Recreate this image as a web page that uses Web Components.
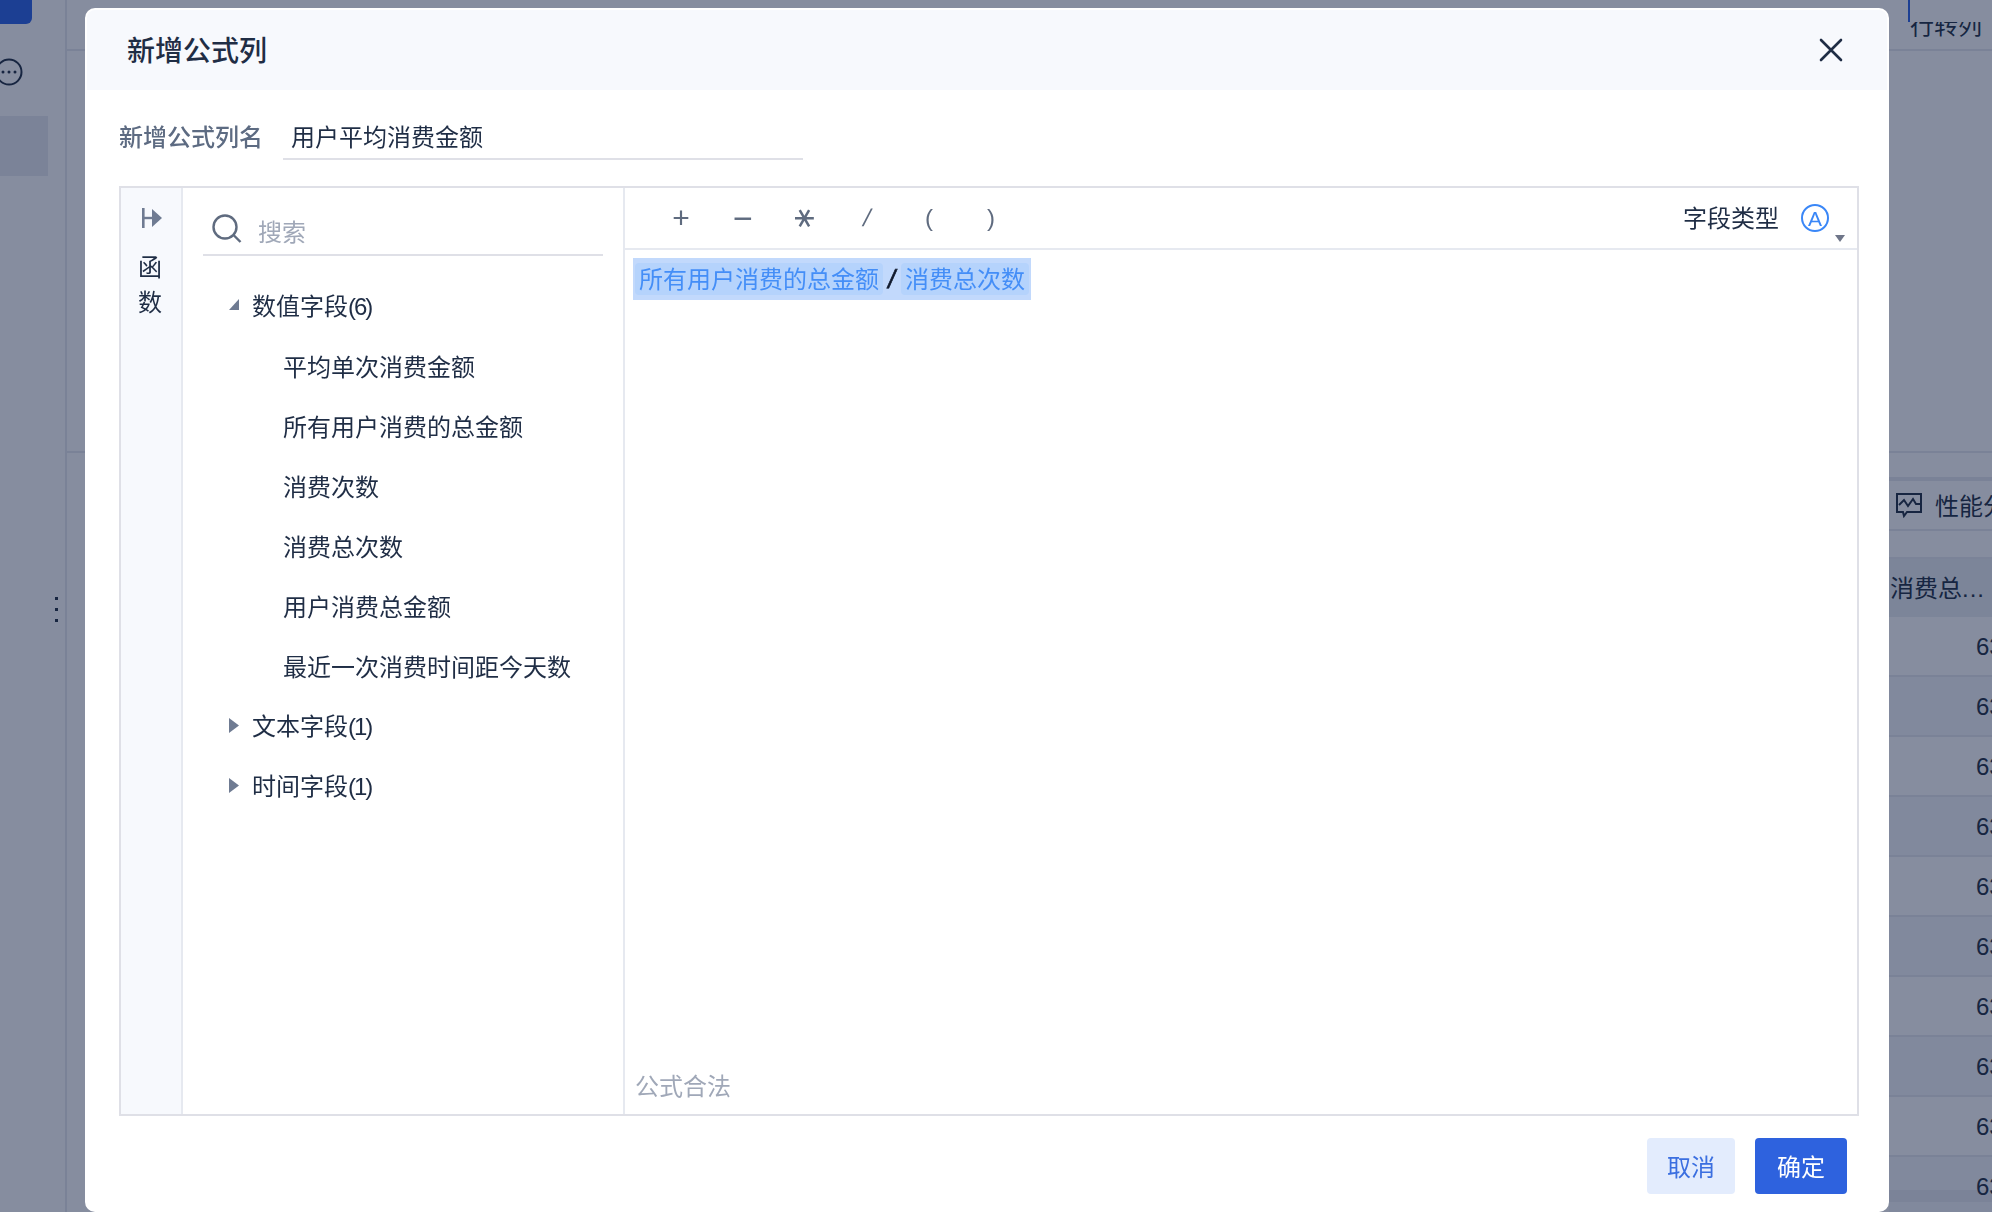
<!DOCTYPE html>
<html lang="zh-CN">
<head>
<meta charset="utf-8">
<title>新增公式列</title>
<style>
	html, body { margin: 0; height: 100%; overflow: hidden; }
	body { font: 24px/36px "Noto Sans CJK SC", "Liberation Sans", sans-serif; color: #1f2d45; background: #fff; }
</style>
</head>
<body>
<app-page>
	<formula-dialog heading="新增公式列" name-label="新增公式列名" name-value="用户平均消费金额">
		<field-tree slot="fields">
			<tree-node label="数值字段" count="6" expanded>
				<tree-leaf>平均单次消费金额</tree-leaf>
				<tree-leaf>所有用户消费的总金额</tree-leaf>
				<tree-leaf>消费次数</tree-leaf>
				<tree-leaf>消费总次数</tree-leaf>
				<tree-leaf>用户消费总金额</tree-leaf>
				<tree-leaf>最近一次消费时间距今天数</tree-leaf>
			</tree-node>
			<tree-node label="文本字段" count="1"></tree-node>
			<tree-node label="时间字段" count="1"></tree-node>
		</field-tree>
		<formula-chip slot="formula">所有用户消费的总金额</formula-chip>
		<span slot="formula" style="width:18px;text-align:center;font:26px/32px 'Liberation Sans',sans-serif;color:#10192c;-webkit-text-stroke:.7px #10192c;transform:skewX(-10deg)">/</span>
		<formula-chip slot="formula">消费总次数</formula-chip>
	</formula-dialog>
</app-page>

<script>
;(function(customElements) {
	class AppPage extends HTMLElement {
		constructor() {
			super()
			this.attachShadow({ mode: 'open' })
		}

		connectedCallback() {
			let rows = ''
			for (let i = 0; i < 10; ++i) {
				rows += `<div class="row${i % 2 ? ' odd' : ''}${i === 9 ? ' last' : ''}">63</div>`
			}
			this.shadowRoot.innerHTML = `
				<style>
					:host {
						display: flex;
						width: 1992px;
						height: 1212px;
						overflow: hidden;
						background: #fff;
					}
					.rail {
						position: relative;
						width: 65px;
						flex: none;
						border-right: 2px solid #e6e8ee;
					}
					.brand {
						width: 32px;
						height: 24px;
						background: #2b63e7;
						border-radius: 0 0 6px 0;
					}
					.more {
						display: block;
						margin: 34px 0 0 -3px;
					}
					.nav-on {
						width: 48px;
						height: 60px;
						margin-top: 30px;
						background: #e9ebf1;
					}
					.dots {
						position: absolute;
						left: 55px;
						top: 597px;
						display: flex;
						flex-direction: column;
						gap: 8px;
					}
					.dots i {
						width: 3px;
						height: 3px;
						background: #212f43;
					}
					.main {
						flex: 1;
						min-width: 0;
					}
					.main .top {
						height: 49px;
						border-bottom: 2px solid #e6e8ee;
					}
					.main .mid {
						height: 400px;
						border-bottom: 2px solid #e6e8ee;
					}
					.side {
						width: 103px;
						flex: none;
						overflow: hidden;
					}
					.tabs {
						position: relative;
						height: 49px;
						border-bottom: 2px solid #e6e8ee;
						overflow: hidden;
					}
					.tabs .active {
						position: absolute;
						left: 19px;
						right: 0;
						top: 0;
						height: 22px;
						background: #fff;
						border-left: 2px solid #2b63e7;
						box-sizing: border-box;
					}
					.tabs .txt {
						padding: 6px 0 0 21px;
						white-space: nowrap;
						color: #212f43;
					}
					.gap {
						height: 400px;
						border-bottom: 2px solid #e6e8ee;
					}
					.perf-top {
						height: 24px;
						border-bottom: 4px solid #e6e8ee;
					}
					.perf {
						display: flex;
						align-items: center;
						gap: 13px;
						height: 48px;
						padding-left: 7px;
						border-bottom: 2px solid #e6e8ee;
						white-space: nowrap;
						color: #212f43;
					}
					.perf svg {
						flex: none;
					}
					.blank {
						height: 26px;
					}
					.thead {
						height: 60px;
						line-height: 56px;
						background: #ebeef3;
						border-top: 2px solid #e8ebf0;
						box-sizing: border-box;
						padding-left: 1px;
						white-space: nowrap;
						color: #212f43;
					}
					.thead span {
						font-family: "Liberation Sans", sans-serif;
						letter-spacing: 1px;
					}
					.row {
						height: 60px;
						line-height: 59px;
						box-sizing: border-box;
						border-bottom: 2px solid #e6e8ee;
						padding-left: 87px;
						font-family: "Liberation Sans", sans-serif;
						background: #fff;
						color: #212f43;
					}
					.row.odd {
						background: #f5f7fa;
					}
					.row.last {
						background: linear-gradient(#f5f7fa 33px, #e8ebf0 33px, #e8ebf0 45px, #f5f7fa 45px);
					}
				</style>
				<div class="rail">
					<div class="brand"></div>
					<svg class="more" width="28" height="28" viewBox="0 0 28 28" fill="none" stroke="#212f43" stroke-width="2">
						<circle cx="12" cy="14" r="12.5"/>
						<g fill="#212f43" stroke="none"><circle cx="6" cy="14" r="1.5"/><circle cx="12" cy="14" r="1.5"/><circle cx="18" cy="14" r="1.5"/></g>
					</svg>
					<div class="nav-on"></div>
					<div class="dots"><i></i><i></i><i></i></div>
				</div>
				<div class="main">
					<div class="top"></div>
					<div class="mid"></div>
				</div>
				<div class="side">
					<div class="tabs">
						<div class="txt">行转列</div>
						<div class="active"></div>
					</div>
					<div class="gap"></div>
					<div class="perf-top"></div>
					<div class="perf">
						<svg width="26" height="25" viewBox="0 0 26 25" fill="none" stroke="#212f43" stroke-width="2">
							<path d="M1 1h24v18H11l-3 4-1-4H1z"/>
							<path d="M3 12l5-5 4 6 5-7 3 5h4"/>
						</svg>
						<span>性能分析</span>
					</div>
					<div class="blank"></div>
					<div class="thead">消费总<span>...</span></div>
					${rows}
				</div>
				<slot></slot>
			`
		}
	}

	class FormulaDialog extends HTMLElement {
		constructor() {
			super()
			this.attachShadow({ mode: 'open' })
		}

		connectedCallback() {
			this.shadowRoot.innerHTML = `
				<style>
					:host {
						position: fixed;
						inset: 0;
						display: block;
						padding: 8px 103px 0 85px;
						background: rgba(13, 27, 63, 0.5);
						box-sizing: border-box;
					}
					.box {
						display: flex;
						flex-direction: column;
						height: 1204px;
						border: 2px solid #fff;
						border-radius: 10px;
						background: #fff;
						box-sizing: border-box;
						overflow: hidden;
					}
					header {
						display: flex;
						align-items: center;
						justify-content: space-between;
						flex: none;
						height: 80px;
						padding: 0 44px 0 40px;
						background: #f7f9fd;
					}
					h1 {
						margin: 0 0 2px;
						font-size: 28px;
						font-weight: 500;
						line-height: 40px;
						color: #1f2d45;
					}
					.close {
						display: block;
					}
					.name {
						display: flex;
						align-items: flex-start;
						gap: 20px;
						margin: 24px 0 26px 32px;
					}
					.name label {
						width: 144px;
						padding-top: 4px;
						font-weight: 500;
						color: #5d6b82;
					}
					.name .input {
						width: 520px;
						height: 46px;
						padding: 4px 0 0 8px;
						box-sizing: border-box;
						border-bottom: 2px solid #dfe0e7;
						color: #1f2d45;
					}
					.panel {
						display: flex;
						flex: none;
						width: 1740px;
						height: 930px;
						margin-left: 32px;
						border: 2px solid #dfe0e7;
						box-sizing: border-box;
					}
					.fold {
						display: flex;
						flex-direction: column;
						align-items: center;
						flex: none;
						width: 58px;
						padding: 20px 2px 0 0;
						background: #f7f9fd;
						border-right: 2px solid #e6e9f0;
						line-height: 35px;
					}
					.fold svg {
						margin: 0 0 20px 4px;
					}
					.fields {
						flex: none;
						width: 440px;
						border-right: 2px solid #e6e9f0;
					}
					.search {
						display: flex;
						align-items: center;
						gap: 16px;
						height: 66px;
						margin: 0 20px;
						padding-left: 9px;
						border-bottom: 2px solid #dfe0e7;
						color: #a0a8b8;
					}
					.search svg {
						margin-top: 15px;
					}
					.search span {
						margin-top: 20px;
						line-height: 36px;
					}
					.editor {
						display: flex;
						flex-direction: column;
						flex: 1;
						min-width: 0;
					}
					.ops {
						position: relative;
						display: flex;
						align-items: center;
						flex: none;
						height: 60px;
						padding: 0 28px 0 25px;
						border-bottom: 2px solid #e6e9f0;
					}
					.ops b {
						width: 62px;
						text-align: center;
						font: 400 30px/36px "Liberation Sans", sans-serif;
						color: #5f6b7f;
					}
					.ops b.thin {
						font-size: 24px;
					}
					.ops b.slash {
						font-size: 24px;
						transform: skewX(-14deg);
					}
					.ops b.star {
						font: 400 30px/36px "DejaVu Sans", sans-serif;
						transform: rotate(90deg);
					}
					.type {
						margin: -2px 22px 0 auto;
						color: #1f2d45;
					}
					.caret {
						position: absolute;
						right: 12px;
						bottom: 6px;
						width: 0;
						height: 0;
						border: 5px solid transparent;
						border-top: 7px solid #6f7689;
						border-bottom: 0;
					}
					.formula {
						flex: 1;
						padding: 8px 0 0 8px;
					}
					.selection {
						display: inline-flex;
						align-items: center;
						height: 42px;
						padding: 0 2px;
						background: #c2d9fc;
					}
					.state {
						padding: 0 0 11px 10px;
						color: #a0a8b8;
					}
					footer {
						display: flex;
						justify-content: flex-end;
						gap: 20px;
						margin: 22px 40px 0 0;
					}
				</style>
				<div class="box">
					<header>
						<h1>${this.getAttribute('heading')}</h1>
						<svg class="close" width="24" height="24" viewBox="0 0 24 24" stroke="#1f2d45" stroke-width="2.6" stroke-linecap="round">
							<path d="M2 2l20 20M22 2L2 22"/>
						</svg>
					</header>
					<div class="name">
						<label>${this.getAttribute('name-label')}</label>
						<div class="input">${this.getAttribute('name-value')}</div>
					</div>
					<div class="panel">
						<div class="fold">
							<svg width="20" height="20" viewBox="0 0 20 20" fill="#6f7b92">
								<rect x="0" y="0" width="2.6" height="20"/>
								<rect x="2" y="8.8" width="8" height="2.4"/>
								<path d="M10 1l10 9-10 9z"/>
							</svg>
							<div>函</div>
							<div>数</div>
						</div>
						<div class="fields">
							<div class="search">
								<svg width="30" height="29" viewBox="0 0 30 29" fill="none" stroke="#5f6b7f" stroke-width="2.4">
									<circle cx="13" cy="13" r="11.5"/>
									<path d="M21.5 21l7 7"/>
								</svg>
								<span>搜索</span>
							</div>
							<slot name="fields"></slot>
						</div>
						<div class="editor">
							<div class="ops">
								<b>+</b>
								<b style="font-size:34px">−</b>
								<b class="star">∗</b>
								<b class="slash">/</b>
								<b class="thin">(</b>
								<b class="thin">)</b>
								<span class="type">字段类型</span>
								<svg width="28" height="28" viewBox="0 0 28 28" fill="none" stroke="#3a87f7" stroke-width="2">
									<circle cx="14" cy="14" r="13"/>
									<text x="14" y="21.5" text-anchor="middle" fill="#3a87f7" stroke="none" font-size="21" font-family="Liberation Sans, sans-serif">A</text>
								</svg>
								<i class="caret"></i>
							</div>
							<div class="formula">
								<div class="selection"><slot name="formula"></slot></div>
							</div>
							<div class="state">公式合法</div>
						</div>
					</div>
					<footer>
						<ui-button variant="light">取消</ui-button>
						<ui-button variant="primary">确定</ui-button>
					</footer>
				</div>
			`
		}
	}

	class FieldTree extends HTMLElement {
		constructor() {
			super()
			this.attachShadow({ mode: 'open' })
		}

		connectedCallback() {
			this.shadowRoot.innerHTML = `
				<style>
					:host {
						display: block;
						padding-top: 20px;
					}
				</style>
				<slot></slot>
			`
		}
	}

	class TreeNode extends HTMLElement {
		constructor() {
			super()
			this.attachShadow({ mode: 'open' })
		}

		connectedCallback() {
			const open = this.hasAttribute('expanded')
			const arrow = open ? 'M10 0v11H0z' : 'M0 0l10 7.5L0 15z'
			this.shadowRoot.innerHTML = `
				<style>
					:host {
						display: block;
					}
					.row {
						display: flex;
						align-items: center;
						gap: 13px;
						height: 60px;
						padding-left: 46px;
						color: #1f2d45;
					}
					svg {
						flex: none;
						margin-top: ${open ? -3 : -1}px;
					}
					.count {
						letter-spacing: -2px;
						font-family: "Liberation Sans", sans-serif;
					}
				</style>
				<div class="row">
					<svg width="10" height="${open ? 11 : 15}" viewBox="0 0 10 ${open ? 11 : 15}" fill="#6f7b92"><path d="${arrow}"/></svg>
					<span>${this.getAttribute('label')}<span class="count">(${this.getAttribute('count')})</span></span>
				</div>
				<slot></slot>
			`
		}
	}

	class TreeLeaf extends HTMLElement {
		constructor() {
			super()
			this.attachShadow({ mode: 'open' })
		}

		connectedCallback() {
			this.shadowRoot.innerHTML = `
				<style>
					:host {
						display: block;
						height: 60px;
						padding-left: 100px;
						line-height: 59px;
						color: #1f2d45;
					}
				</style>
				<slot></slot>
			`
		}
	}

	class FormulaChip extends HTMLElement {
		constructor() {
			super()
			this.attachShadow({ mode: 'open' })
		}

		connectedCallback() {
			this.shadowRoot.innerHTML = `
				<style>
					:host {
						display: inline-block;
						height: 32px;
						padding: 0 4px;
						border-radius: 4px;
						line-height: 30px;
						background: #b5d3fc;
						color: #448ef7;
					}
				</style>
				<slot></slot>
			`
		}
	}

	class UiButton extends HTMLElement {
		constructor() {
			super()
			this.attachShadow({ mode: 'open' })
		}

		connectedCallback() {
			const primary = this.getAttribute('variant') === 'primary'
			this.shadowRoot.innerHTML = `
				<style>
					:host {
						display: block;
						width: ${primary ? 92 : 88}px;
						height: 56px;
						border-radius: 4px;
						text-align: center;
						line-height: 56px;
						background: ${primary ? '#2e62de' : '#e3ecfd'};
						color: ${primary ? '#fff' : '#3b6fe0'};
					}
				</style>
				<slot></slot>
			`
		}
	}

	customElements.define('app-page', AppPage)
	customElements.define('formula-dialog', FormulaDialog)
	customElements.define('field-tree', FieldTree)
	customElements.define('tree-node', TreeNode)
	customElements.define('tree-leaf', TreeLeaf)
	customElements.define('formula-chip', FormulaChip)
	customElements.define('ui-button', UiButton)
})(customElements)
</script>
</body>
</html>
